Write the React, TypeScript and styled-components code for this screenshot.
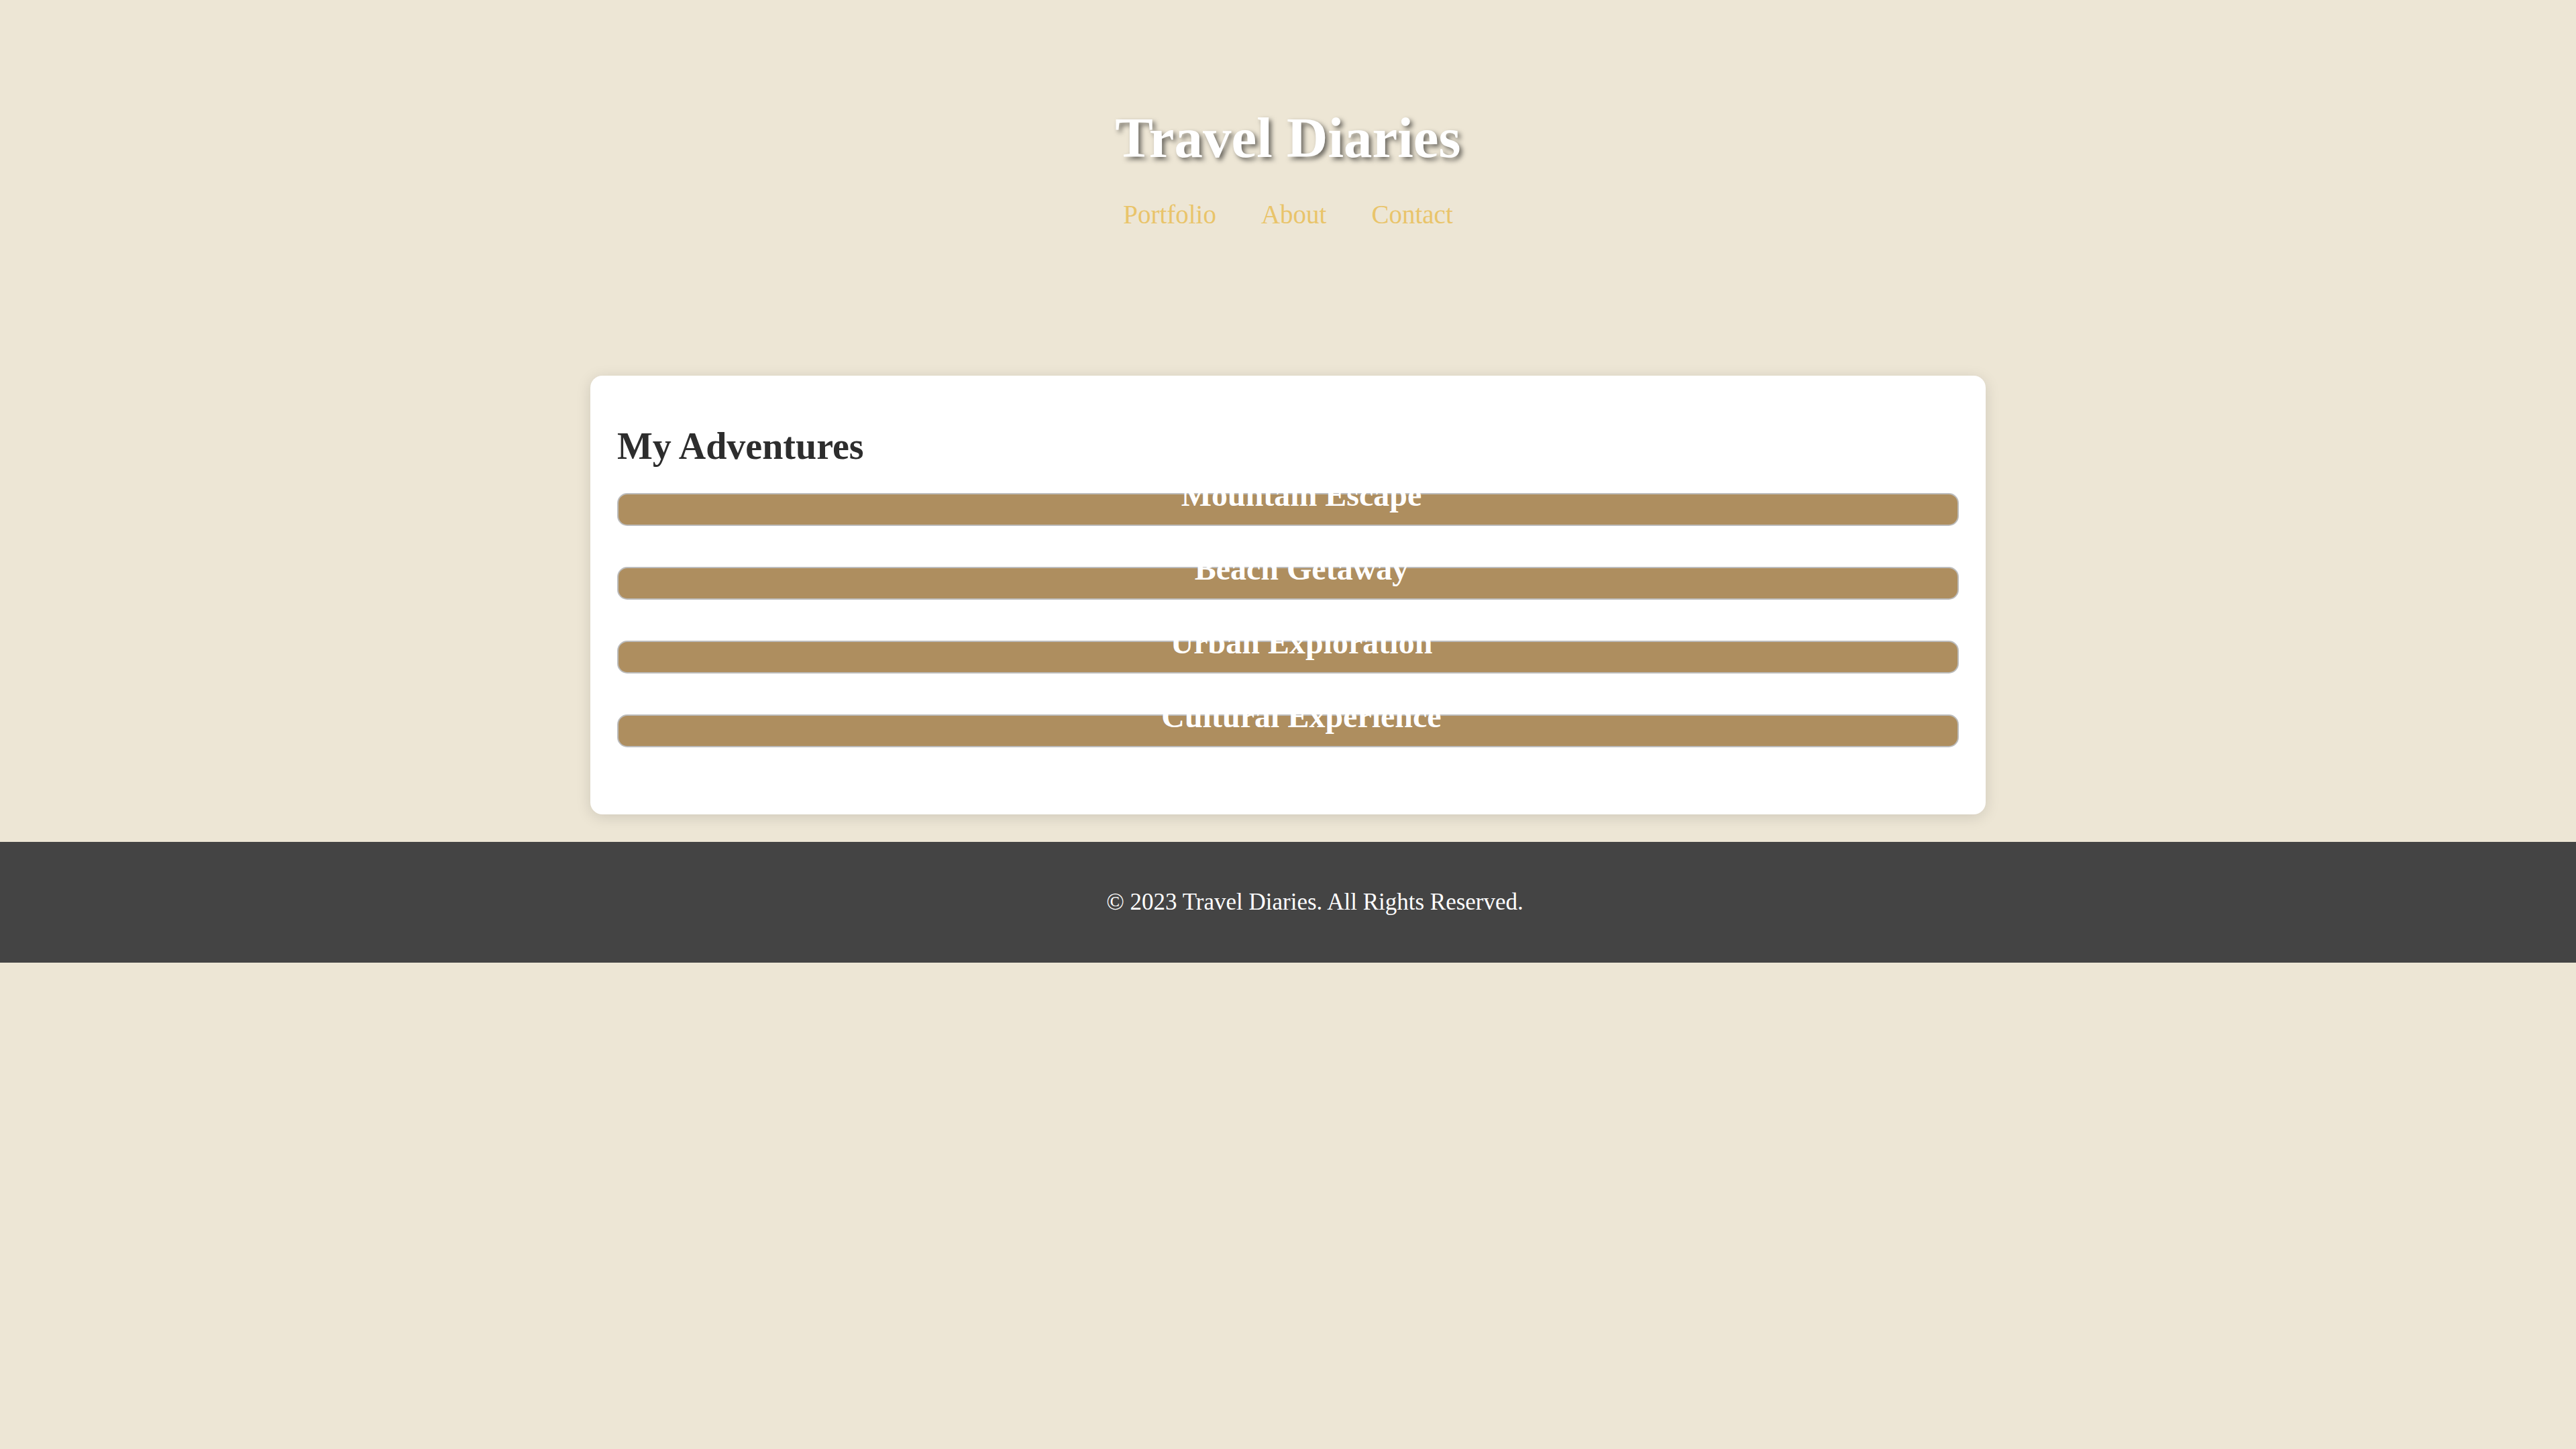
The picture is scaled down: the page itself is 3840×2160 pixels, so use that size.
import React from "react"
import styled, { createGlobalStyle } from "styled-components"

const GlobalStyle = createGlobalStyle`
  html, body {
    margin: 0;
    padding: 0;
    background: #ede6d5;
    font-family: "Liberation Serif", "Times New Roman", serif;
  }
`

const Page = styled.div`
  display: flex;
  flex-direction: column;
`

const Header = styled.header`
  padding-top: 163px;
  text-align: center;
`

const Title = styled.h1`
  margin: 0;
  font-size: 85px;
  line-height: 1;
  font-weight: 700;
  color: #ffffff;
  text-shadow: 4px 4px 7px rgba(0, 0, 0, 0.55);
`

const Nav = styled.nav`
  display: flex;
  justify-content: center;
  gap: 67px;
  margin-top: 52px;
`

const NavLink = styled.a`
  font-size: 39px;
  line-height: 1;
  color: #e9c46a;
  text-decoration: none;
`

const Main = styled.main`
  padding-top: 221px;
`

const Card = styled.section`
  box-sizing: border-box;
  width: 2080px;
  margin: 0 auto;
  padding: 40px 40px 100px;
  background: #ffffff;
  border-radius: 18px;
  box-shadow: 0 4px 22px rgba(0, 0, 0, 0.13);
`

const CardTitle = styled.h2`
  margin: 37px 0 42px;
  font-size: 56px;
  line-height: 1;
  font-weight: 700;
  color: #2d2d2d;
`

const AdventureList = styled.div`
  display: flex;
  flex-direction: column;
  gap: 61px;
`

// the name sits high, its top half is white on the white card
const AdventureItem = styled.div`
  box-sizing: border-box;
  height: 49px;
  padding: 0 0 0 40px;
  border: 2px solid #bcbcbc;
  border-radius: 15px;
  background: #ae8e5f;
  text-align: center;
  cursor: pointer;
`

const AdventureName = styled.h3`
  margin: -23px 0 0;
  font-size: 48px;
  line-height: 1;
  font-weight: 700;
  color: #ffffff;
`

const Footer = styled.footer`
  margin-top: 41px;
  padding: 72px 0 73px 80px;
  background: #444444;
  text-align: center;
`

const FooterText = styled.p`
  margin: 0;
  font-size: 35px;
  line-height: 1;
  color: #ffffff;
`

const adventures = ["Mountain Escape", "Beach Getaway", "Urban Exploration", "Cultural Experience"]

export default function App() {
  return (
    <Page>
      <GlobalStyle />
      <Header>
        <Title>Travel Diaries</Title>
        <Nav>
          <NavLink href="#portfolio">Portfolio</NavLink>
          <NavLink href="#about">About</NavLink>
          <NavLink href="#contact">Contact</NavLink>
        </Nav>
      </Header>

      <Main>
        <Card>
          <CardTitle>My Adventures</CardTitle>
          <AdventureList>
            {adventures.map((name) => (
              <AdventureItem key={name}>
                <AdventureName>{name}</AdventureName>
              </AdventureItem>
            ))}
          </AdventureList>
        </Card>
      </Main>

      <Footer>
        <FooterText>© 2023 Travel Diaries. All Rights Reserved.</FooterText>
      </Footer>
    </Page>
  )
}
